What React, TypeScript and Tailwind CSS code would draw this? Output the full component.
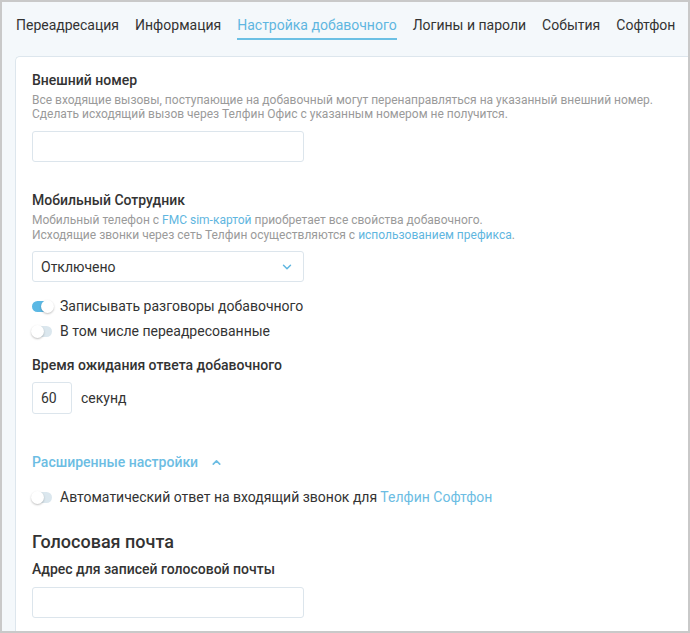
import { ChevronDown, ChevronUp } from "lucide-react"

function Toggle({ on }: { on?: boolean }) {
  return (
    <span className={`relative inline-flex h-[11px] w-[20px] shrink-0 items-center rounded-full ${on ? "bg-[#5bb8e4]" : "bg-[#dbe7ee]"}`}>
      <span
        className={`absolute h-[13px] w-[13px] rounded-full bg-white shadow-[0_1px_2px_rgba(0,0,0,0.25)] ${on ? "left-[9px]" : "left-[-1px]"}`}
      />
    </span>
  )
}

const tabs = ["Переадресация", "Информация", "Настройка добавочного", "Логины и пароли", "События", "Софтфон"]

export default function App() {
  return (
    <div className="h-[633px] w-[690px] overflow-hidden border-2 border-[#c9c9c9] bg-[#f4f8fb] font-['Roboto',sans-serif] text-[#333]">

      {/* Tabs */}
      <div className="flex h-[54px] gap-[16px] pl-[14px] pt-[13px] text-[14px] leading-[20px]">
        {tabs.map((t, i) => (
          <div key={t} className="flex flex-col">
            <span className={i === 2 ? "text-[#5fb6e0]" : "text-[#333]"}>{t}</span>
            <span className={`mt-[3px] h-[2px] ${i === 2 ? "bg-[#6cc0e4]" : ""}`}></span>
          </div>
        ))}
      </div>

      {/* Card */}
      <div className="ml-[13px] h-full rounded-tl-[5px] border-l border-t border-[#dde6ed] bg-white pl-[16px] pt-[13px] text-[14px] leading-[20px]">

        <div className="font-medium">Внешний номер</div>
        <p className="mt-[3px] text-[12px] leading-[14px] text-[#9a9a9a]">
          Все входящие вызовы, поступающие на добавочный могут перенаправляться на указанный внешний номер.<br />
          Сделать исходящий вызов через Телфин Офис с указанным номером не получится.
        </p>
        <div className="mt-[10px] h-[31px] w-[272px] rounded-[3px] border border-[#dce5ec]"></div>

        <div className="mt-[28px] font-medium">Мобильный Сотрудник</div>
        <p className="mt-[3px] text-[12px] leading-[15px] text-[#9a9a9a]">
          Мобильный телефон с <span className="text-[#5fb6e0]">FMC sim-картой</span> приобретает все свойства добавочного.<br />
          Исходящие звонки через сеть Телфин осуществляются с <span className="text-[#5fb6e0]">использованием префикса</span>.
        </p>
        <div className="mt-[8px] flex h-[31px] w-[272px] items-center justify-between rounded-[3px] border border-[#dce5ec] pl-[8px] pr-[9px]">
          <span>Отключено</span>
          <ChevronDown size={14} strokeWidth={2.5} className="text-[#5fb6e0]" />
        </div>

        <div className="mt-[14px] flex items-center gap-[8px]">
          <Toggle on />
          <span>Записывать разговоры добавочного</span>
        </div>
        <div className="mt-[5px] flex items-center gap-[8px]">
          <Toggle />
          <span>В том числе переадресованные</span>
        </div>

        <div className="mt-[14px] font-medium">Время ожидания ответа добавочного</div>
        <div className="mt-[7px] flex items-center gap-[9px]">
          <div className="flex h-[32px] w-[40px] items-center rounded-[3px] border border-[#dce5ec] pl-[8px]">60</div>
          <span>секунд</span>
        </div>

        <div className="mt-[38px] flex items-center gap-[12px] font-medium text-[#6cbde3]">
          <span>Расширенные настройки</span>
          <ChevronUp size={13} strokeWidth={3} />
        </div>

        <div className="mt-[15px] flex items-center gap-[8px]">
          <Toggle />
          <span>Автоматический ответ на входящий звонок для <span className="text-[#6cbde3]">Телфин Софтфон</span></span>
        </div>

        <div className="mt-[23px] text-[18px] font-medium leading-[24px]">Голосовая почта</div>
        <div className="mt-[5px] font-medium">Адрес для записей голосовой почты</div>
        <div className="mt-[8px] h-[31px] w-[272px] rounded-[3px] border border-[#dce5ec]"></div>
      </div>
    </div>
  )
}
